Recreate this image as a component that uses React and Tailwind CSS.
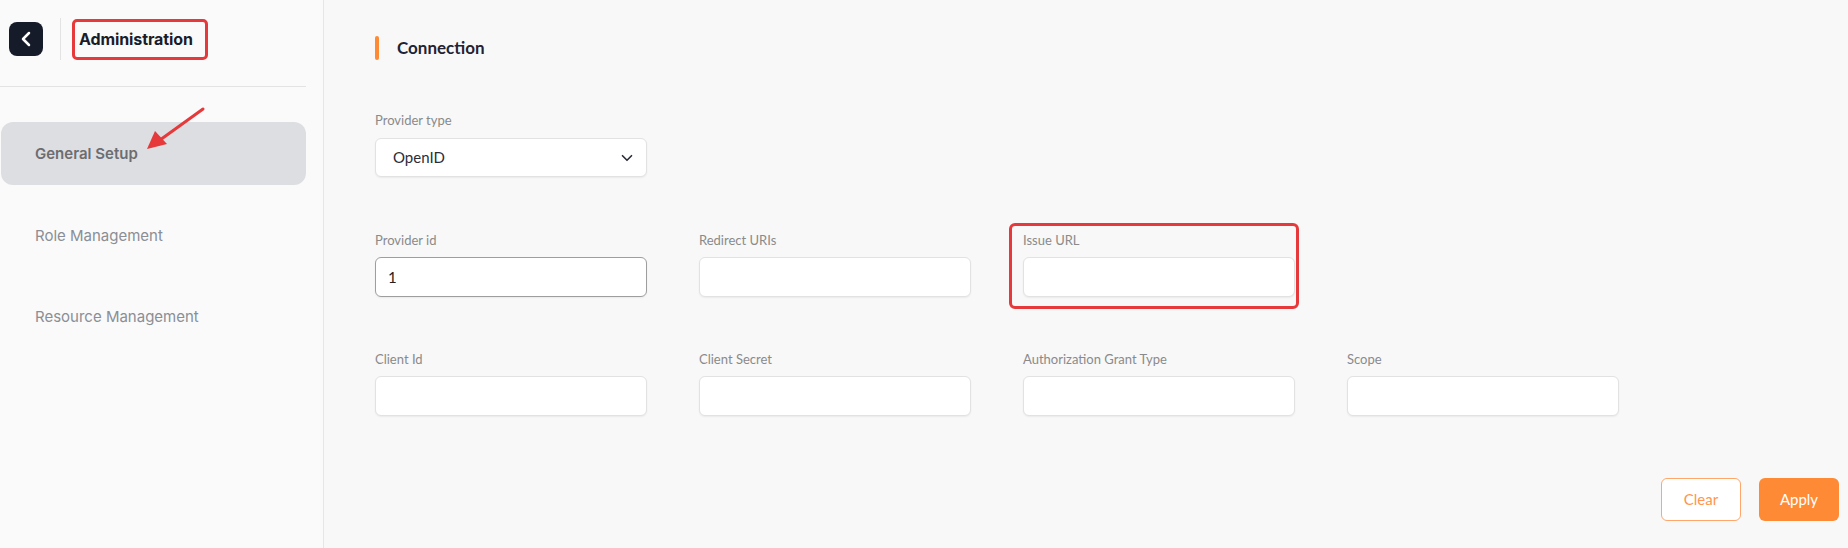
import React from "react";
import { ChevronLeft, ChevronDown } from "lucide-react";

function Field({ label, value, strong, highlight }) {
  return (
    <div className="relative w-[272px]">
      {highlight && (
        <div className="pointer-events-none absolute -left-[14px] -top-[9px] h-[86px] w-[290px] rounded-[6px] border-[3px] border-[#e5393b]" />
      )}
      <div className="text-[13px] leading-[16px] text-[#8a8a8a]">{label}</div>
      <div
        className={
          "mt-[9px] flex h-[40px] items-center rounded-[6px] bg-white pl-[12px] text-[15px] text-[#222] shadow-[0_1px_2px_rgba(0,0,0,0.06)] " +
          (strong ? "border border-[#9e9e9e]" : "border border-[#e2e2e2]")
        }
      >
        {value}
      </div>
    </div>
  );
}

export default function App() {
  return (
    <div className="relative flex h-[548px] w-full overflow-hidden bg-[#f8f8f8]">
      {/* Sidebar */}
      <aside
        className="h-full w-[324px] shrink-0 border-r border-[#e6e6e6] bg-[#fafafa]"
        style={{ fontFamily: "Inter, 'Noto Sans', sans-serif" }}
      >
        <div className="w-[306px]">
          <div className="border-b border-[#e3e3e3] pb-[26px] pt-[18px]">
            <div className="flex h-[42px] items-center">
              <div className="ml-[9px] flex h-[34px] w-[34px] items-center justify-center rounded-[8px] bg-[#161b2a]">
                <ChevronLeft size={24} color="#ffffff" strokeWidth={2.5} />
              </div>
              <div className="ml-[17px] h-[42px] w-px bg-[#e3e3e3]" />
              <div className="ml-[11px] flex h-[41px] w-[136px] items-center rounded-[5px] border-[3px] border-[#e5393b] pl-[4px]">
                <span className="text-[16px] font-bold tracking-[-0.1px] text-[#1a1d29]">Administration</span>
              </div>
            </div>
          </div>
          <nav className="mt-[35px] flex flex-col gap-[18px]">
            <div className="ml-[1px] flex h-[63px] w-[305px] items-center rounded-[12px] bg-[#dddee1] pl-[34px] pt-[2px] text-[15px] font-semibold text-[#6b6d72]">
              General Setup
            </div>
            <div className="flex h-[63px] items-center pl-[35px] pt-[3px] text-[15px] text-[#8b8e95]">Role Management</div>
            <div className="flex h-[63px] items-center pl-[35px] pt-[3px] text-[15px] text-[#8b8e95]">Resource Management</div>
          </nav>
        </div>
      </aside>

      {/* Annotation arrow */}
      <svg
        className="pointer-events-none absolute left-[140px] top-[100px]"
        width="72"
        height="56"
        viewBox="0 0 72 56"
      >
        <line x1="63" y1="9" x2="20" y2="40" stroke="#e5393b" strokeWidth="3" strokeLinecap="round" />
        <polygon points="7,49 15,31 27,44" fill="#e5393b" />
      </svg>

      {/* Main */}
      <main
        className="flex flex-1 flex-col pl-[51px] pr-[9px] pt-[36px]"
        style={{ fontFamily: "Lato, 'Open Sans', sans-serif" }}
      >
        <div className="flex h-[24px] items-center">
          <div className="h-[24px] w-[4px] rounded-full bg-[#ff8a35]" />
          <h2 className="ml-[18px] text-[17px] font-bold text-[#1f2335]">Connection</h2>
        </div>

        <div className="mt-[52px] w-[272px]">
          <div className="text-[13px] leading-[16px] text-[#8a8a8a]">Provider type</div>
          <div className="mt-[10px] flex h-[39px] items-center justify-between rounded-[6px] border border-[#e2e2e2] bg-white pl-[17px] pr-[10px] shadow-[0_1px_2px_rgba(0,0,0,0.06)]">
            <span className="text-[15px] text-[#2a2d38]">OpenID</span>
            <ChevronDown size={18} color="#2a2d38" strokeWidth={2.2} />
          </div>
        </div>

        <div className="mt-[55px] grid grid-cols-[272px_272px_272px_272px] gap-x-[52px] gap-y-[54px]">
          <Field label="Provider id" value="1" strong />
          <Field label="Redirect URIs" />
          <Field label="Issue URL" highlight />
          <div />
          <Field label="Client Id" />
          <Field label="Client Secret" />
          <Field label="Authorization Grant Type" />
          <Field label="Scope" />
        </div>

        <div className="mt-[62px] flex justify-end gap-[18px]">
          <button className="flex h-[43px] w-[80px] items-center justify-center rounded-[6px] border border-[#ffa66a] bg-white text-[15px] text-[#ff9550]">
            Clear
          </button>
          <button className="flex h-[43px] w-[80px] items-center justify-center rounded-[6px] bg-[#ff8a35] text-[15px] text-white">
            Apply
          </button>
        </div>
      </main>
    </div>
  );
}
